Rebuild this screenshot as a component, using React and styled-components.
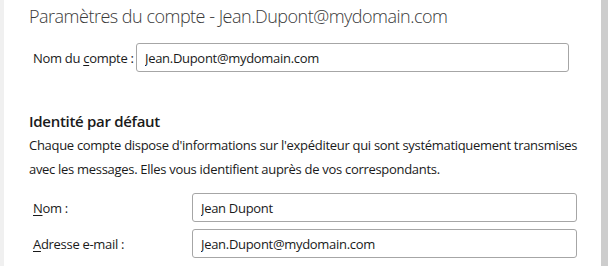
import React from 'react'
import styled, {createGlobalStyle} from 'styled-components'

const Global = createGlobalStyle`
    html, body {
        margin: 0;
        padding: 0;
        background: #ffffff;
        overflow: hidden;
    }
    body {
        font-family: "Segoe UI", "Open Sans", "Noto Sans", sans-serif;
        color: #1a1a1a;
    }
`

const Window = styled.div`
    display: flex;
    width: 608px;
    height: 266px;
    overflow: hidden;
`

const Gutter = styled.div`
    width: 4px;
    background: #f0f0f0;
    flex-shrink: 0;
`

const Content = styled.div`
    flex: 1;
    padding: 4px 0 0 25px;
    background: #ffffff;
`

const Scrollbar = styled.div`
    width: 7px;
    background: #cdcdcd;
    flex-shrink: 0;
`

const Title = styled.h1`
    margin: 0;
    font-size: 18px;
    font-weight: 300;
    letter-spacing: -0.5px;
    color: #3a3a3a;
    line-height: 24px;
`

const Row = styled.div`
    display: flex;
    align-items: center;
    margin-top: ${p => p.$top || 0}px;
    padding-left: 4px;
`

const Label = styled.label`
    font-size: 13px;
    letter-spacing: -0.3px;
    width: ${p => p.$width}px;
    flex-shrink: 0;
    color: #1a1a1a;
    white-space: nowrap;
    u {
        text-decoration: underline;
        text-underline-offset: 2px;
    }
`

const Field = styled.input`
    box-sizing: border-box;
    width: ${p => p.$width}px;
    height: 29px;
    border: 1px solid #a6a6a6;
    border-radius: 3px;
    padding: 0 8px;
    font-family: inherit;
    font-size: 13px;
    letter-spacing: -0.3px;
    color: #1a1a1a;
    outline: none;
`

const Section = styled.h2`
    margin: 39px 0 0;
    font-size: 15px;
    font-weight: 600;
    letter-spacing: -0.3px;
    line-height: 20px;
    color: #1a1a1a;
`

const Text = styled.p`
    margin: 2px 0 0;
    font-size: 13px;
    letter-spacing: -0.3px;
    line-height: 24px;
    width: 560px;
    color: #1a1a1a;
`

export default function App() {
    return (
        <Window>
            <Global/>
            <Gutter/>
            <Content>
                <Title>Paramètres du compte - Jean.Dupont@mydomain.com</Title>
                <Row $top={15}>
                    <Label $width={103}>Nom du <u>c</u>ompte :</Label>
                    <Field $width={433} defaultValue="Jean.Dupont@mydomain.com"/>
                </Row>
                <Section>Identité par défaut</Section>
                <Text>
                    Chaque compte dispose d'informations sur l'expéditeur qui sont systématiquement transmises
                    avec les messages. Elles vous identifient auprès de vos correspondants.
                </Text>
                <Row $top={12}>
                    <Label $width={159}><u>N</u>om :</Label>
                    <Field $width={385} defaultValue="Jean Dupont"/>
                </Row>
                <Row $top={7}>
                    <Label $width={159}><u>A</u>dresse e-mail :</Label>
                    <Field $width={385} defaultValue="Jean.Dupont@mydomain.com"/>
                </Row>
            </Content>
            <Scrollbar/>
        </Window>
    )
}
